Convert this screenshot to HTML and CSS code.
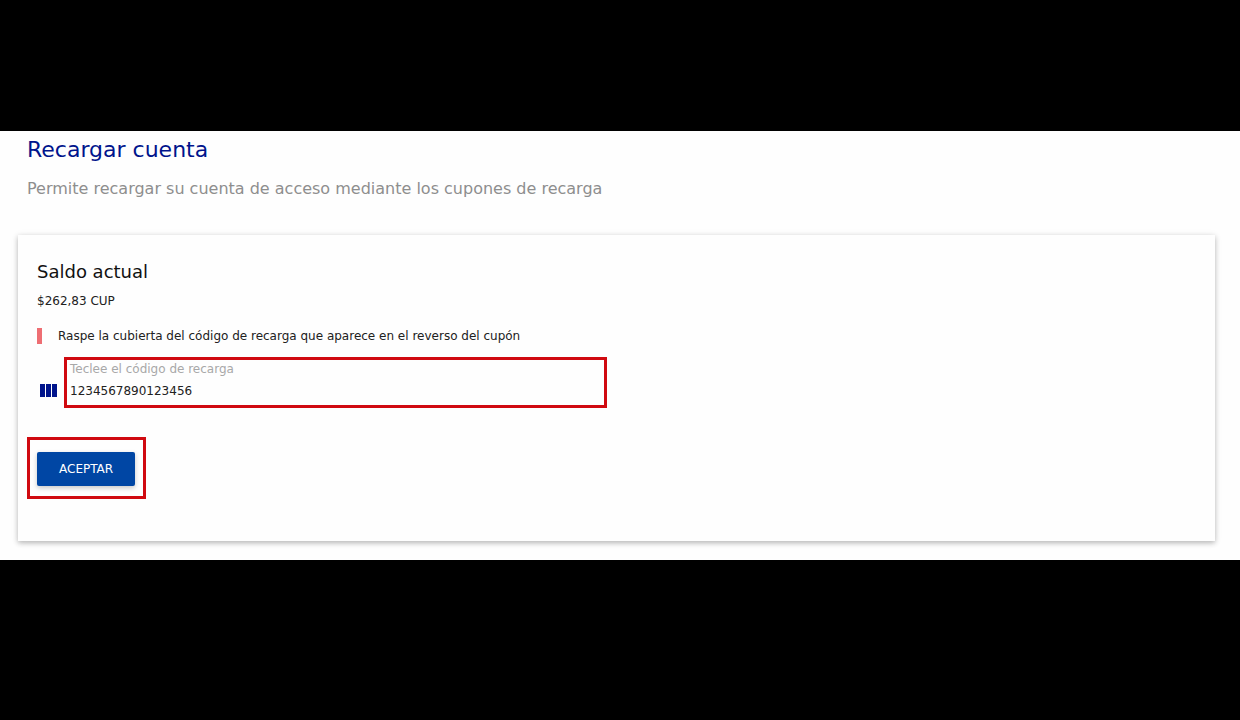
FILE: index.html
```html
<!DOCTYPE html>
<html lang="es">
<head>
<meta charset="utf-8">
<title>Recargar cuenta</title>
<link rel="stylesheet" href="styles.css">
</head>
<body>
<main class="page">
  <header class="page-header">
    <h1 class="title">Recargar cuenta</h1>
    <p class="subtitle">Permite recargar su cuenta de acceso mediante los cupones de recarga</p>
  </header>
  <section class="card">
    <h2 class="balance-title">Saldo actual</h2>
    <p class="balance">$262,83 CUP</p>
    <p class="hint">Raspe la cubierta del código de recarga que aparece en el reverso del cupón</p>
    <form class="form">
      <div class="field-row">
        <svg class="field-icon" viewBox="0 0 17 13" aria-hidden="true"><path d="M0 0h5v13H0zM6 0h5v13H6zM12 0h5v13h-5z"/></svg>
        <div class="field">
          <label class="label" for="code">Teclee el código de recarga</label>
          <input class="input" id="code" type="text" value="1234567890123456">
        </div>
      </div>
      <div class="action">
        <button class="button" type="button">ACEPTAR</button>
      </div>
    </form>
  </section>
</main>
</body>
</html>
```

FILE: styles.css
```css
* { box-sizing: border-box; }
html { background: #000; }
body {
  margin: 0;
  padding: 131px 0 160px;
  background: #000;
  font-family: Verdana, "DejaVu Sans", sans-serif;
  font-size: 12px;
  color: #212121;
}
h1, h2, p { margin: 0; font-weight: 400; }
.page { background: #fefefe; padding: 4px 25px 19px 18px; }
.page-header { padding-left: 9px; }
.title { color: #00148c; font-size: 22px; line-height: 30px; }
.subtitle { margin-top: 12px; color: #8e8e8e; font-size: 16px; line-height: 24px; }
.card {
  margin-top: 34px;
  padding: 24px 19px 42px;
  background: #fefefe;
  box-shadow: 0 2px 5px rgba(0, 0, 0, .24), 0 1px 8px rgba(0, 0, 0, .08);
}
.balance-title { font-size: 18px; line-height: 26px; color: #111; }
.balance { margin-top: 7px; line-height: 18px; }
.hint { margin-top: 18px; padding-left: 16px; border-left: 5px solid #ee6e73; line-height: 16px; }
.field-row { display: flex; align-items: center; gap: 7px; margin-top: 13px; padding-left: 3px; }
.field-icon { width: 17px; height: 13px; margin-top: 16px; fill: #00148c; }
.field {
  display: flex;
  flex-direction: column;
  width: 47%;
  border: 3px solid #d00a10;
  padding: 0 3px 2px;
}
.label { color: #a8a8a8; line-height: 18px; }
.input {
  height: 25px;
  padding: 0;
  border: 0;
  outline: 0;
  background: transparent;
  color: #212121;
  font: inherit;
}
.action {
  width: max-content;
  margin: 29px 0 0 -10px;
  padding: 12px 8px 10px 7px;
  border: 3px solid #d00a10;
}
.button {
  display: block;
  height: 34px;
  padding: 0 22px;
  border: 0;
  border-radius: 2px;
  background: #0046a4;
  box-shadow: 0 2px 5px rgba(0, 0, 0, .22);
  color: #fff;
  font: inherit;
}
```
